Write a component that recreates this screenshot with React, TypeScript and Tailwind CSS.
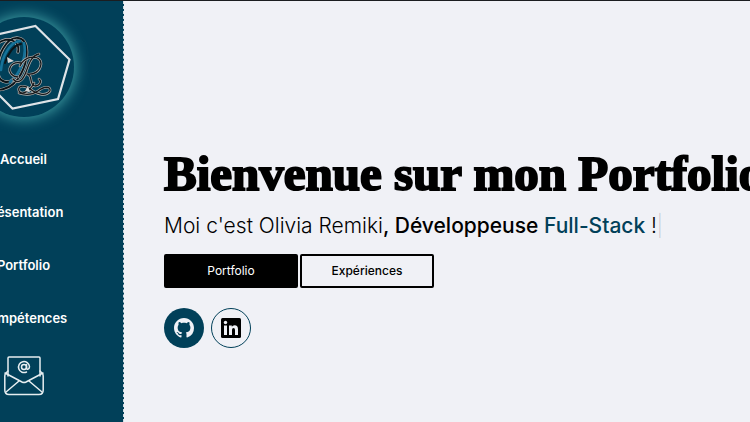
import type { ReactNode } from "react";

const MONOGRAM =
  "M44 35C46 26 38 20 28 24C14 30 6 51 13 65C19 78 38 74 47 57C55 42 55 22 44 21C33 20 22 38 24 56C25 66 35 68 42 60";
const LETTER_R =
  "M65 37C57 39 55 47 52 55C49 63 44 68 39 62M44 60C31 59 34 43 47 46M46 49C51 38 67 37 67 47C66 55 59 58 53 57C60 59 54 67 61 69C66 69 68 64 65 62M60 66C56 74 48 79 45 74C43 68 51 68 56 72C62 77 72 80 76 74C77 69 70 69 64 74C58 78 51 78 45 76";

function Logo() {
  return (
    <svg viewBox="0 0 100 100" className="h-[100px] w-[100px]" fill="none" role="img" aria-label="Logo OR">
      <path d="M61.500 9 95.500 42.500 84 82 38.500 91.500 5 58 16 19Z" stroke="#dfe3e7" strokeWidth="2.200" />
      <g strokeLinecap="round" strokeLinejoin="round">
        <path d={MONOGRAM} stroke="#b3aeac" strokeWidth="3.200" />
        <path d={MONOGRAM} stroke="#0b1418" strokeWidth="1.800" />
        <path d="M46 24C36 25 28 39 27 53M50 26C53 38 47 56 36 65" stroke="#16739a" strokeWidth="2.600" />
        <path d="M47 27C40 28 34 36 31 46" stroke="#0b1418" strokeWidth="2" />
        <path d={LETTER_R} stroke="#b9b5b2" strokeWidth="2.600" />
        <path d={LETTER_R} stroke="#15191c" strokeWidth="1.300" />
        <path d="M33 40 40 44 34 46ZM51 74 54 69 56 75Z" fill="#d6d6d6" />
      </g>
    </svg>
  );
}

function MailIcon() {
  return (
    <svg viewBox="0 0 40 40" className="h-10 w-10" fill="none" stroke="#e6edf0" strokeWidth="1.500" strokeLinejoin="round" strokeLinecap="round">
      <path d="M4 20V2Q4 1 5 1H35Q36 1 36 2V20" />
      <path d="M4 15 2 17Q0.800 18 0.800 20V34Q0.800 38.500 5 38.500H35Q39.200 38.500 39.200 34V20Q39.200 18 38 17L36 15" />
      <path d="M1 17 18 26Q20 27 22 26L39 17M2 36 15 25M38 36 25 25" />
      <circle cx="20" cy="11" r="2.500" />
      <path d="M22.500 8.500V12Q23 14 24.500 13Q25.500 12 25.500 10.500A5.500 5.500 0 1 0 22.500 16" />
    </svg>
  );
}

function GithubIcon() {
  return (
    <svg viewBox="0 0 16 16" className="size-5" fill="currentColor">
      <path d="M8 0C3.580 0 0 3.580 0 8c0 3.540 2.290 6.530 5.470 7.590.4.070.55-.17.55-.38 0-.19-.01-.82-.01-1.490-2.010.37-2.530-.49-2.690-.94-.09-.23-.48-.94-.82-1.130-.28-.15-.68-.52-.01-.53.63-.01 1.080.58 1.230.82.72 1.210 1.870.87 2.330.66.07-.52.28-.87.51-1.070-1.780-.2-3.640-.89-3.640-3.950 0-.87.31-1.590.82-2.150-.08-.2-.36-1.020.08-2.120 0 0 .67-.21 2.200.82.64-.18 1.320-.27 2-.27s1.360.09 2 .27c1.530-1.040 2.200-.82 2.200-.82.44 1.100.16 1.920.08 2.120.51.56.82 1.270.82 2.150 0 3.070-1.870 3.750-3.650 3.950.29.25.54.73.54 1.480 0 1.070-.01 1.930-.01 2.200 0 .21.15.46.55.38A8.010 8.010 0 0 0 16 8c0-4.420-3.580-8-8-8Z" />
    </svg>
  );
}

function LinkedinIcon() {
  return (
    <svg viewBox="0 0 20 20" className="size-5">
      <rect width="20" height="20" rx="1.500" fill="#000" />
      <g fill="#f0f1f6">
        <circle cx="4.500" cy="4.500" r="1.700" />
        <path d="M3 7.500H6V17H3ZM8 7.500H10.800V8.800Q11.600 7.300 13.600 7.300Q17 7.300 17 11.500V17H14V12Q14 10 12.500 10Q11 10 11 12V17H8Z" />
      </g>
    </svg>
  );
}

function NavLink({ children }: { children: ReactNode }) {
  return (
    <a href="#" className="text-[13px] leading-5 font-semibold text-white">
      {children}
    </a>
  );
}

export default function App() {
  return (
    <div className="flex min-h-screen overflow-hidden border-t border-[#1b1d20] bg-[#f0f1f6] font-['Inter',sans-serif] text-black">
      <aside className="-ml-[76px] flex w-[200px] shrink-0 flex-col items-center border-r border-dashed border-[#d5dde2] bg-[#014059] pt-4">
        <a href="#" className="rounded-full bg-[#014059] shadow-[0_0_14px_2px_#3d9aa0]">
          <Logo />
        </a>
        <nav className="mt-8 flex flex-col items-center gap-[33px]">
          <NavLink>Accueil</NavLink>
          <NavLink>Présentation</NavLink>
          <NavLink>Portfolio</NavLink>
          <NavLink>Compétences</NavLink>
        </nav>
        <a href="#" aria-label="Contact" className="mt-7">
          <MailIcon />
        </a>
      </aside>
      <main className="flex min-w-0 flex-1 flex-col justify-center pt-[68px] pl-10">
        <h1 className="font-['Liberation_Serif',serif] text-[49px] leading-[60px] font-bold whitespace-nowrap [-webkit-text-stroke:2px_black]">
          Bienvenue sur mon Portfolio
        </h1>
        <p className="mt-1.5 text-[21px] leading-8 font-light whitespace-nowrap">
          Moi c'est Olivia Remiki
          <span className="font-medium">
            , Développeuse <span className="text-[#014059]">Full-Stack</span>
          </span>{" "}
          !<span className="font-thin text-gray-400">|</span>
        </p>
        <div className="mt-3 flex gap-[2px] text-xs">
          <button className="h-[34px] w-[134px] rounded-xs border-2 border-black bg-black text-white">Portfolio</button>
          <button className="h-[34px] w-[134px] rounded-xs border-2 border-black font-medium">Expériences</button>
        </div>
        <div className="mt-5 flex gap-[7px]">
          <a href="#" aria-label="GitHub" className="flex size-10 items-center justify-center rounded-full bg-[#014059] text-[#f0f1f6]">
            <GithubIcon />
          </a>
          <a href="#" aria-label="LinkedIn" className="flex size-10 items-center justify-center rounded-full border border-[#014059]">
            <LinkedinIcon />
          </a>
        </div>
      </main>
    </div>
  );
}
